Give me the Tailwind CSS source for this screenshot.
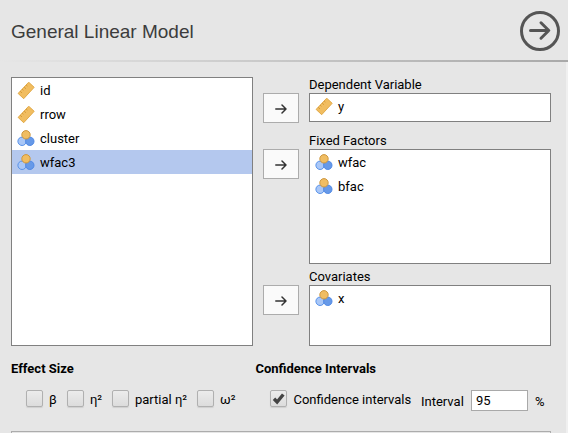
<!DOCTYPE html>
<html lang="en">
<head>
<meta charset="utf-8">
<title>General Linear Model</title>
<script src="https://cdn.jsdelivr.net/npm/@tailwindcss/browser@4"></script>
</head>
<body class="w-[568px] h-[433px] overflow-hidden bg-[#e6e6e6] font-[Roboto,sans-serif] text-[13px] leading-[16px] text-black">
<svg class="hidden" aria-hidden="true">
  <symbol id="ruler" viewBox="0 0 18 18">
    <path d="M11.7 .2 17.2 5.3 6.7 16.7 1.1 11.4Z" fill="#f1bd60" stroke="#dfa540" stroke-width=".9" stroke-linejoin="round"/>
    <path d="M3.2 9.3 4.9 10.9M5.2 7.2 6.4 8.3M7.2 5.1 8.9 6.7M9.2 3 10.4 4.1" fill="none" stroke="#cf922f" stroke-width=".9"/>
  </symbol>
  <symbol id="nominal" viewBox="0 0 18 18">
    <circle cx="5.1" cy="11.3" r="4.2" fill="#a9c7f7" stroke="#5792ea"/>
    <circle cx="12.8" cy="11.3" r="4.2" fill="#6699e8" stroke="#5089e5"/>
    <circle cx="9" cy="4.8" r="4.2" fill="#f0bd62" stroke="#cd9740"/>
  </symbol>
  <symbol id="arrow" viewBox="0 0 12 10">
    <path d="M.8 5H11M7 1 11 5 7 9" fill="none" stroke="#333" stroke-width="1.5" stroke-linecap="round" stroke-linejoin="round"/>
  </symbol>
</svg>
<div class="flex flex-col h-full">
  <header class="flex h-[60px] shrink-0 justify-between pl-[11px] pr-[8px]">
    <h1 class="pt-[20px] font-['Liberation_Sans',sans-serif] text-[19px] leading-[24px] text-[#3c3c3c]">General Linear Model</h1>
    <svg class="mt-[11px] size-[40px]" viewBox="0 0 40 40" fill="none" stroke="#555">
      <circle cx="20" cy="20" r="18.5" stroke-width="3"/>
      <path d="M10.5 19.5H28.5M21 11.8 28.8 19.5 21 27.2" stroke-width="3" stroke-linecap="round" stroke-linejoin="round"/>
    </svg>
  </header>
  <div class="h-[2px] shrink-0 bg-linear-to-r from-[#e6e6e6] to-[#a9a9a9]"></div>
  <main class="flex-1 border-r-2 border-[#f0f0f0] pl-[11px] pt-[15px]">
    <div class="flex gap-[10px]">
      <ul class="h-[269px] w-[242px] border border-[#808080] bg-white">
        <li class="flex h-6 items-center gap-[5px] pl-[5px] pt-[2px]"><svg class="size-[18px]"><use href="#ruler"/></svg>id</li>
        <li class="flex h-6 items-center gap-[5px] pl-[5px] pt-[2px]"><svg class="size-[18px]"><use href="#ruler"/></svg>rrow</li>
        <li class="flex h-6 items-center gap-[5px] pl-[5px] pt-[2px]"><svg class="size-[18px]"><use href="#nominal"/></svg>cluster</li>
        <li class="flex h-6 items-center gap-[5px] bg-[#b4c8ee] pl-[5px] pt-[2px]"><svg class="size-[18px]"><use href="#nominal"/></svg>wfac3</li>
      </ul>
      <div class="flex flex-col">
        <section class="flex h-[56px] gap-[10px]">
          <button class="mt-[16px] flex h-[30px] w-[36px] items-center justify-center border border-[#acacac] bg-[#fafafa] pt-[2px]"><svg class="h-[10px] w-[12px]"><use href="#arrow"/></svg></button>
          <div><h2 class="h-[16px]">Dependent Variable</h2>
            <ul class="h-[29px] w-[242px] border border-[#808080] bg-white"><li class="flex h-6 items-center gap-[5px] pl-[5px] pt-[2px]"><svg class="size-[18px]"><use href="#ruler"/></svg>y</li></ul></div>
        </section>
        <section class="flex h-[136px] gap-[10px]">
          <button class="mt-[16px] flex h-[30px] w-[36px] items-center justify-center border border-[#acacac] bg-[#fafafa] pt-[2px]"><svg class="h-[10px] w-[12px]"><use href="#arrow"/></svg></button>
          <div><h2 class="h-[16px]">Fixed Factors</h2>
            <ul class="h-[115px] w-[242px] border border-[#808080] bg-white">
              <li class="flex h-6 items-center gap-[5px] pl-[5px] pt-[2px]"><svg class="size-[18px]"><use href="#nominal"/></svg>wfac</li>
              <li class="flex h-6 items-center gap-[5px] pl-[5px] pt-[2px]"><svg class="size-[18px]"><use href="#nominal"/></svg>bfac</li></ul></div>
        </section>
        <section class="flex gap-[10px]">
          <button class="mt-[16px] flex h-[30px] w-[36px] items-center justify-center border border-[#acacac] bg-[#fafafa] pt-[2px]"><svg class="h-[10px] w-[12px]"><use href="#arrow"/></svg></button>
          <div><h2 class="h-[16px]">Covariates</h2>
            <ul class="h-[61px] w-[242px] border border-[#808080] bg-white"><li class="flex h-6 items-center gap-[5px] pl-[5px] pt-[2px]"><svg class="size-[18px]"><use href="#nominal"/></svg>x</li></ul></div>
        </section>
      </div>
    </div>
    <div class="mt-[15px] flex">
      <section class="w-[244.4px]">
        <h3 class="font-bold">Effect Size</h3>
        <div class="mt-[13px] flex pl-[15px]">
          <label class="flex w-[41px] gap-[6px]"><span class="size-[17px] shrink-0 rounded-[2px] border border-[#b0b0b0] bg-linear-to-b from-[#ececec] to-[#dcdcdc] shadow-[0_1px_1px_#0000001a]"></span><span class="pt-[2px]">β</span></label>
          <label class="flex w-[45px] gap-[6px]"><span class="size-[17px] shrink-0 rounded-[2px] border border-[#b0b0b0] bg-linear-to-b from-[#ececec] to-[#dcdcdc] shadow-[0_1px_1px_#0000001a]"></span><span class="pt-[2px]">η²</span></label>
          <label class="flex w-[85px] gap-[6px] whitespace-nowrap"><span class="size-[17px] shrink-0 rounded-[2px] border border-[#b0b0b0] bg-linear-to-b from-[#ececec] to-[#dcdcdc] shadow-[0_1px_1px_#0000001a]"></span><span class="pt-[2px]">partial η²</span></label>
          <label class="flex gap-[6px]"><span class="size-[17px] shrink-0 rounded-[2px] border border-[#b0b0b0] bg-linear-to-b from-[#ececec] to-[#dcdcdc] shadow-[0_1px_1px_#0000001a]"></span><span class="pt-[2px]">ω²</span></label>
        </div>
      </section>
      <section>
        <h3 class="font-bold">Confidence Intervals</h3>
        <div class="mt-[13px] flex pl-[14.6px]">
          <label class="flex w-[151px] gap-[6.5px] whitespace-nowrap"><span class="size-[17px] shrink-0 rounded-[2px] border border-[#b0b0b0] bg-linear-to-b from-[#ececec] to-[#dcdcdc] shadow-[0_1px_1px_#0000001a]"><svg class="size-[15px]" viewBox="0 0 15 15"><path d="M3 7.8 6.1 11 12.3 3.5" fill="none" stroke="#444" stroke-width="3.4"/></svg></span><span class="pt-[2px]">Confidence intervals</span></label>
          <span class="w-[50px] pt-[4px]">Interval</span>
          <span class="h-[21px] w-[57px] border border-[#a9a9a9] bg-white pl-[4px] pt-[2px]">95</span>
          <span class="pl-[7px] pt-[4px]">%</span>
        </div>
      </section>
    </div>
    <div class="mt-[20px] h-[10px] w-[540px] border border-[#acacac]"></div>
  </main>
</div>
</body>
</html>
